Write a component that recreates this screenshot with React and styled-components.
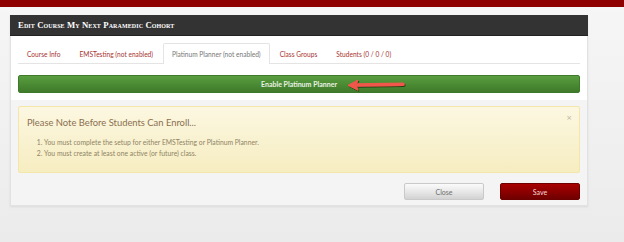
import React from "react";
import styled, { createGlobalStyle } from "styled-components";

const Global = createGlobalStyle`
  html, body { margin: 0; padding: 0; }
  body {
    width: 624px;
    height: 242px;
    overflow: hidden;
    background: linear-gradient(180deg, #f6f6f6 0%, #ebebeb 100%);
    font-family: Lato, "Open Sans", sans-serif;
  }
`;

const TopBar = styled.div`
  height: 7px;
  background: #8e0000;
`;

const Page = styled.div`
  padding: 8px 36px 0 10px;
`;

const Modal = styled.div`
  width: 578px;
  background: #f4f4f4;
  border: 1px solid #e2e2e2;
  border-top: none;
  box-sizing: border-box;
  box-shadow: 0 1px 2px rgba(0, 0, 0, 0.08);
`;

const Header = styled.div`
  height: 21px;
  background: #333333;
  border-bottom: 1px solid #222;
  box-sizing: border-box;
  display: flex;
  align-items: center;
  padding-left: 8px;
  margin: 0 -1px;
`;

const Title = styled.div`
  color: #ffffff;
  font-family: "Liberation Serif", "Times New Roman", serif;
  font-weight: bold;
  font-variant: small-caps;
  font-size: 8.7px;
  letter-spacing: 0.1px;
`;

const Body = styled.div`
  background: #ffffff;
  padding: 7px 7px 7px 7px;
`;

const Tabs = styled.div`
  display: flex;
  border-bottom: 1px solid #e4e4e4;
  height: 20px;
`;

const Tab = styled.div`
  font-size: 6.6px;
  padding: 0 8px;
  display: flex;
  align-items: center;
  box-sizing: border-box;
  color: ${(p) => (p.$active ? "#777777" : "#a83232")};
  border: 1px solid ${(p) => (p.$active ? "#e4e4e4" : "transparent")};
  border-bottom: none;
  border-radius: 2px 2px 0 0;
  background: #fff;
  margin-bottom: ${(p) => (p.$active ? "-1px" : "0")};
  height: ${(p) => (p.$active ? "21px" : "20px")};
  margin-right: 1px;
`;

const ButtonRow = styled.div`
  position: relative;
  margin-top: 11px;
`;

const GreenButton = styled.div`
  height: 18px;
  border-radius: 2px;
  background: linear-gradient(180deg, #5a9e40 0%, #4a8a33 55%, #3f7a2b 100%);
  border: 1px solid #3d7a2a;
  box-sizing: border-box;
  color: #e9f2e4;
  font-size: 7px;
  font-weight: 700;
  display: flex;
  align-items: center;
  justify-content: center;
`;

const Arrow = styled.svg`
  position: absolute;
  left: 328px;
  top: 2px;
`;

const Lower = styled.div`
  padding: 6px 7px 5px 7px;
`;

const Alert = styled.div`
  position: relative;
  height: 67px;
  box-sizing: border-box;
  border: 1px solid #f3e6a8;
  border-radius: 2px;
  background: linear-gradient(180deg, #fcf7e1 0%, #f6edc1 100%);
  padding: 9px 8px 0 8px;
  color: #8a7a4c;
`;

const AlertTitle = styled.div`
  font-size: 9.4px;
  color: #8a7050;
  line-height: 13px;
`;

const List = styled.ol`
  margin: 8px 0 0 0;
  padding-left: 17px;
  font-size: 6.8px;
  line-height: 11px;
  color: #8f8466;
`;

const CloseX = styled.div`
  position: absolute;
  right: 7px;
  top: 7px;
  font-size: 7px;
  color: #b8b09a;
  font-family: "DejaVu Sans", sans-serif;
`;

const Footer = styled.div`
  display: flex;
  justify-content: flex-end;
  gap: 16px;
  margin-top: 10px;
`;

const Btn = styled.div`
  width: 80px;
  height: 17px;
  box-sizing: border-box;
  border-radius: 2px;
  display: flex;
  align-items: center;
  justify-content: center;
  font-size: 7px;
  border: 1px solid ${(p) => (p.$primary ? "#6e0000" : "#c9c9c9")};
  color: ${(p) => (p.$primary ? "#f4dada" : "#6f6f6f")};
  background: ${(p) =>
    p.$primary
      ? "linear-gradient(180deg, #a80000 0%, #8a0000 55%, #6e0000 100%)"
      : "linear-gradient(180deg, #fbfbfb 0%, #e6e6e6 55%, #d2d2d2 100%)"};
`;

export default function App() {
  return (
    <>
      <Global />
      <TopBar />
      <Page>
        <Modal>
          <Header>
            <Title>Edit Course My Next Paramedic Cohort</Title>
          </Header>
          <Body>
            <Tabs>
              <Tab>Course Info</Tab>
              <Tab>EMSTesting (not enabled)</Tab>
              <Tab $active>Platinum Planner (not enabled)</Tab>
              <Tab>Class Groups</Tab>
              <Tab>Students (0 / 0 / 0)</Tab>
            </Tabs>
            <ButtonRow>
              <GreenButton>Enable Platinum Planner</GreenButton>
              <Arrow width="62" height="16" viewBox="0 0 62 16">
                <defs>
                  <filter id="sh" x="-20%" y="-50%" width="140%" height="200%">
                    <feDropShadow dx="0.8" dy="1" stdDeviation="0.6" floodColor="#1a2a10" floodOpacity="0.8" />
                  </filter>
                </defs>
                <g filter="url(#sh)">
                  <path d="M9 8 L57 7.2" stroke="#f0564a" strokeWidth="3.4" strokeLinecap="round" fill="none" />
                  <path d="M2 8.3 L12 3 L10 8.1 L12 13.2 Z" fill="#f0564a" stroke="#f0564a" strokeWidth="1" strokeLinejoin="round" />
                </g>
              </Arrow>
            </ButtonRow>
          </Body>
          <Lower>
            <Alert>
              <CloseX>×</CloseX>
              <AlertTitle>Please Note Before Students Can Enroll...</AlertTitle>
              <List>
                <li>You must complete the setup for either EMSTesting or Platinum Planner.</li>
                <li>You must create at least one active (or future) class.</li>
              </List>
            </Alert>
            <Footer>
              <Btn>Close</Btn>
              <Btn $primary>Save</Btn>
            </Footer>
          </Lower>
        </Modal>
      </Page>
    </>
  );
}
